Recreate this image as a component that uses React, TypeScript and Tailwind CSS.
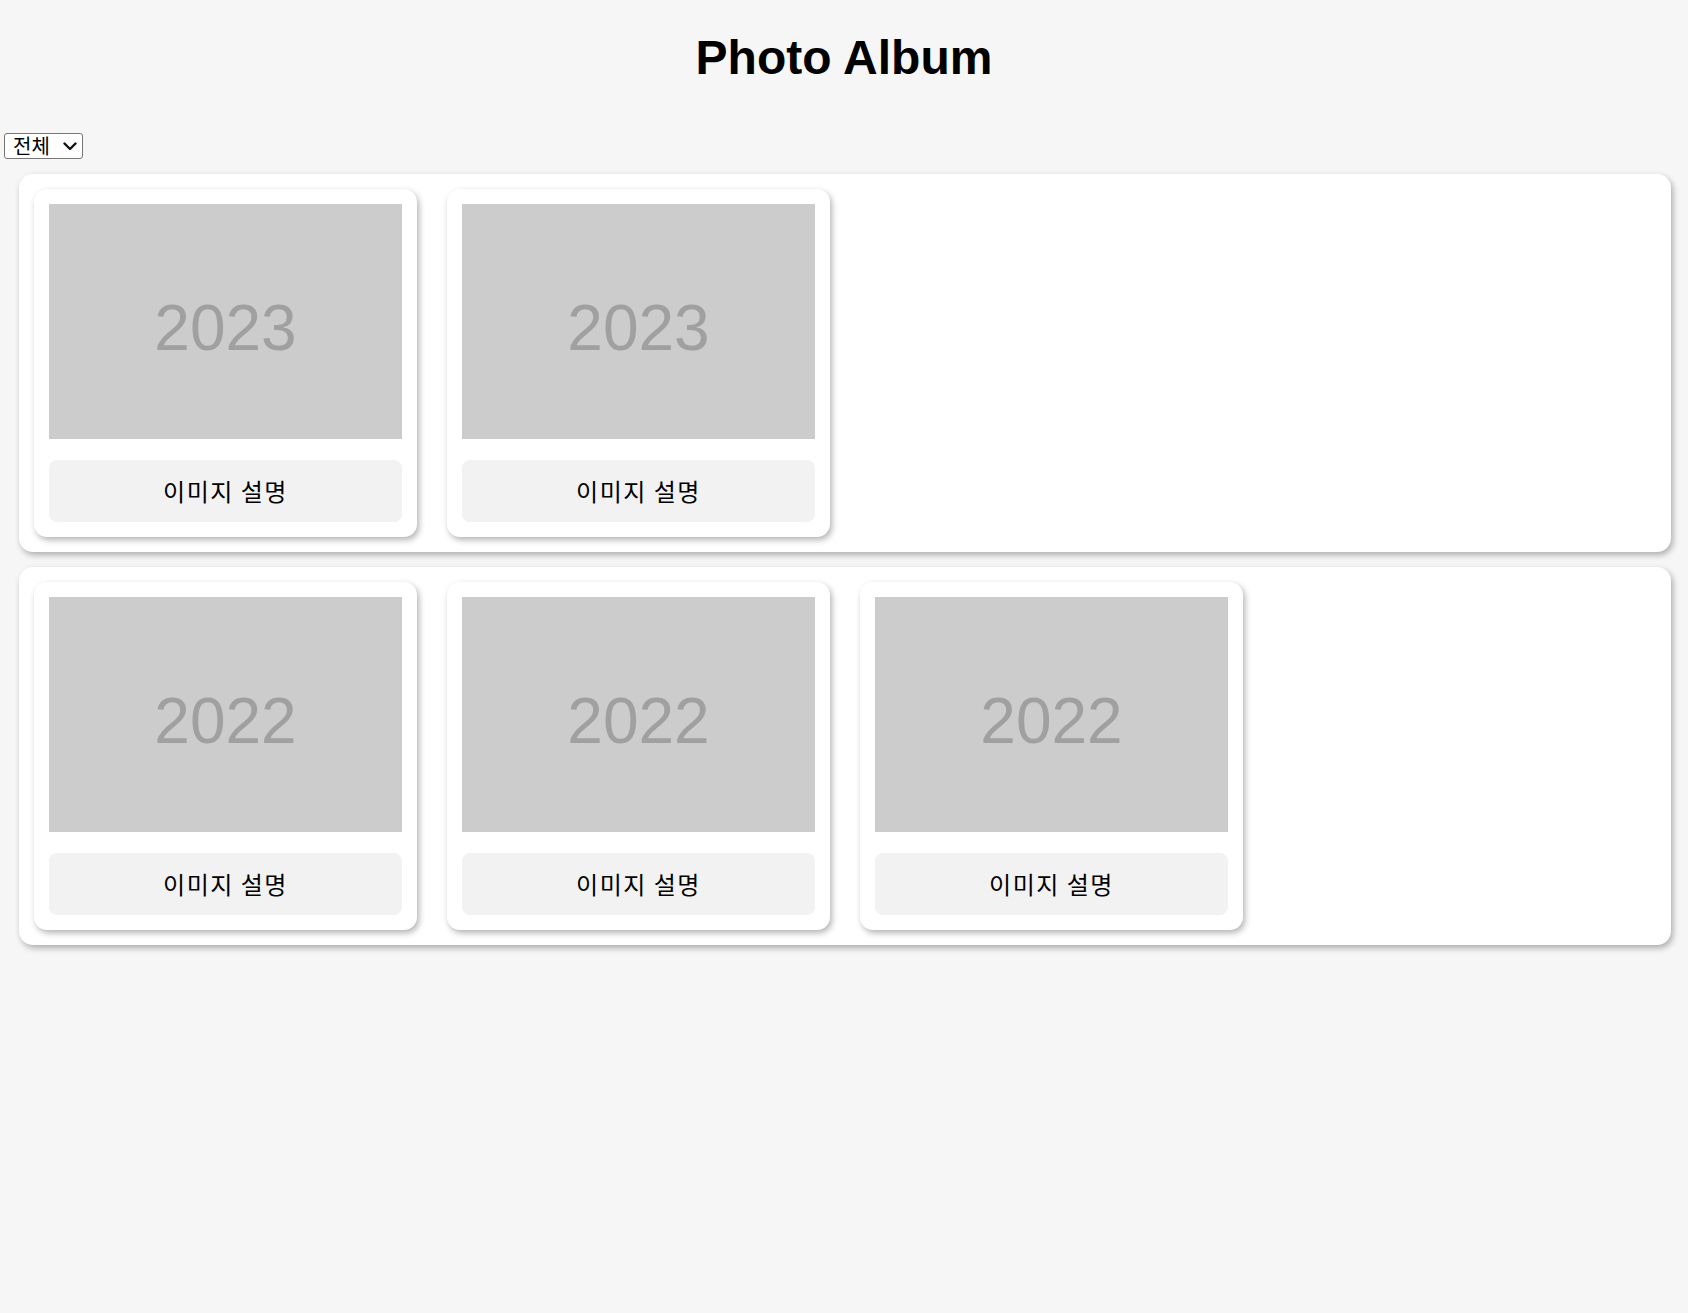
const albums = [
    { year: '2023', count: 2 },
    { year: '2022', count: 3 },
]

function PhotoCard({ year }: { year: string }) {
    return (
        <div className="w-[383px] shrink-0 bg-white rounded-[13px] p-[15px] shadow-[2px_3px_6px_rgba(0,0,0,0.3)]">
            <div className="h-[235px] bg-[#cccccc] flex items-center justify-center">
                <span
                    className="text-[64px] text-[#a0a0a0] leading-none mt-[12px]"
                    style={{ fontFamily: "'Liberation Sans', Arial, sans-serif" }}
                >
                    {year}
                </span>
            </div>
            <div
                className="mt-[21px] h-[62px] bg-[#f2f2f2] rounded-[8px] flex items-center justify-center text-[24px] text-black tracking-[1.5px]"
                style={{ fontFamily: "'Noto Sans CJK KR', sans-serif" }}
            >
                이미지 설명
            </div>
        </div>
    )
}

export default function App() {
    return (
        <div className="min-h-screen bg-[#f6f6f6] pb-10">
            <h1
                className="pt-[30px] text-center text-[48px] font-bold text-black leading-[55px]"
                style={{ fontFamily: "'Liberation Sans', Arial, sans-serif" }}
            >
                Photo Album
            </h1>

            {/* Year filter */}
            <div className="mt-[48px] pl-[4px] flex">
                <div className="relative flex">
                    <select
                        className="appearance-none w-[79px] h-[26px] bg-white border border-[#767676] rounded-[3px] pl-[8px] text-[20px] leading-[22px] text-black"
                        style={{ fontFamily: "'Noto Sans CJK KR', sans-serif" }}
                        defaultValue="all"
                    >
                        <option value="all">전체</option>
                        <option value="2023">2023</option>
                        <option value="2022">2022</option>
                    </select>
                    <svg
                        width="14"
                        height="9"
                        viewBox="0 0 14 9"
                        className="absolute left-[59px] top-[9px] pointer-events-none"
                    >
                        <polyline points="1.5,1.5 7,7 12.5,1.5" fill="none" stroke="#111" strokeWidth="2.4" strokeLinecap="round" strokeLinejoin="round" />
                    </svg>
                </div>
            </div>

            <div className="mt-[15px] ml-[19px] mr-[17px] flex flex-col gap-[15px]">
                {albums.map((album) => (
                    <div
                        key={album.year}
                        className="bg-white rounded-[14px] p-[15px] flex gap-[30px] shadow-[2px_3px_6px_rgba(0,0,0,0.3)]"
                    >
                        {Array.from({ length: album.count }).map((_, i) => (
                            <PhotoCard key={i} year={album.year} />
                        ))}
                    </div>
                ))}
            </div>
        </div>
    )
}
